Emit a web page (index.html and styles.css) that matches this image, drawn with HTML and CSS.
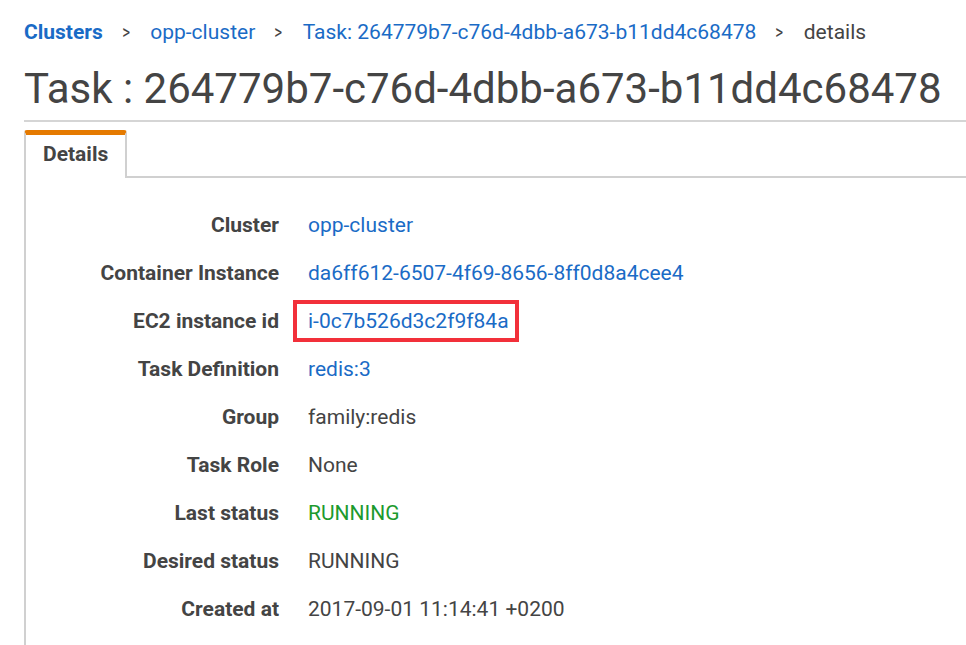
FILE: index.html
```html
<!DOCTYPE html>
<html>
<head>
<meta charset="utf-8">
<link rel="stylesheet" href="styles.css">
</head>
<body>
<div class="page">
  <nav class="crumbs">
    <a class="crumb strong">Clusters</a>
    <span class="sep">&gt;</span>
    <a class="crumb">opp-cluster</a>
    <span class="sep">&gt;</span>
    <a class="crumb">Task: 264779b7-c76d-4dbb-a673-b11dd4c68478</a>
    <span class="sep">&gt;</span>
    <span class="crumb current">details</span>
  </nav>
  <h1 class="title">Task : 264779b7-c76d-4dbb-a673-b11dd4c68478</h1>
  <div class="tabs">
    <div class="tab active">Details</div>
    <div class="tab-fill"></div>
  </div>
  <div class="panel">
    <dl class="props">
      <div class="row"><dt>Cluster</dt><dd><a>opp-cluster</a></dd></div>
      <div class="row"><dt>Container Instance</dt><dd><a>da6ff612-6507-4f69-8656-8ff0d8a4cee4</a></dd></div>
      <div class="row"><dt>EC2 instance id</dt><dd><a class="boxed">i-0c7b526d3c2f9f84a</a></dd></div>
      <div class="row"><dt>Task Definition</dt><dd><a>redis:3</a></dd></div>
      <div class="row"><dt>Group</dt><dd>family:redis</dd></div>
      <div class="row"><dt>Task Role</dt><dd>None</dd></div>
      <div class="row"><dt>Last status</dt><dd class="ok">RUNNING</dd></div>
      <div class="row"><dt>Desired status</dt><dd>RUNNING</dd></div>
      <div class="row"><dt>Created at</dt><dd>2017-09-01 11:14:41 +0200</dd></div>
    </dl>
  </div>
</div>
</body>
</html>
```
FILE: styles.css
```css
html, body {
  margin: 0;
  padding: 0;
  background: #fff;
}
body {
  font-family: Roboto, "Liberation Sans", sans-serif;
  color: #444;
}
.page {
  padding-left: 24px;
}
.crumbs {
  display: flex;
  align-items: center;
  height: 28px;
  padding-top: 18px;
  font-size: 21px;
}
.crumb {
  color: #1a6bc6;
}
.crumb.strong {
  font-weight: 700;
}
.crumb.current {
  color: #444;
}
.sep {
  color: #444;
  margin: 0 19px 0 18px;
  font-size: 20px;
  transform: scaleX(0.75);
}
.title {
  margin: 0;
  padding-top: 16px;
  height: 58px;
  line-height: 54px;
  font-size: 42px;
  font-weight: 400;
  color: #444;
  border-bottom: 2px solid #d5d5d5;
  white-space: nowrap;
}
.tabs {
  display: flex;
  margin-top: 8px;
}
.tab {
  border: 2px solid #d0d0d0;
  border-top: 5px solid #e57a00;
  border-bottom: none;
  border-radius: 3px 3px 0 0;
  font-size: 21px;
  font-weight: 700;
  line-height: 38px;
  padding-left: 17px;
  box-sizing: border-box;
  width: 103px;
  height: 48px;
}
.tab-fill {
  flex: 1;
  border-bottom: 2px solid #d0d0d0;
}
.panel {
  border-left: 2px solid #d0d0d0;
  padding-top: 23px;
  height: 470px;
}
.props {
  margin: 0;
}
.row {
  display: flex;
  align-items: center;
  height: 48px;
}
.row dt {
  width: 253px;
  text-align: right;
  font-weight: 700;
  font-size: 21px;
  color: #444;
}
.row dd {
  margin: 0 0 0 29px;
  font-size: 21px;
  color: #444;
}
.row dd a {
  color: #1a6bc6;
}
.row dd.ok {
  color: #1d9a2e;
}
.boxed {
  display: inline-block;
  border: 4px solid #f2303a;
  padding: 5px 6px 5px 11px;
  margin-left: -15px;
  line-height: 24px;
}
```
